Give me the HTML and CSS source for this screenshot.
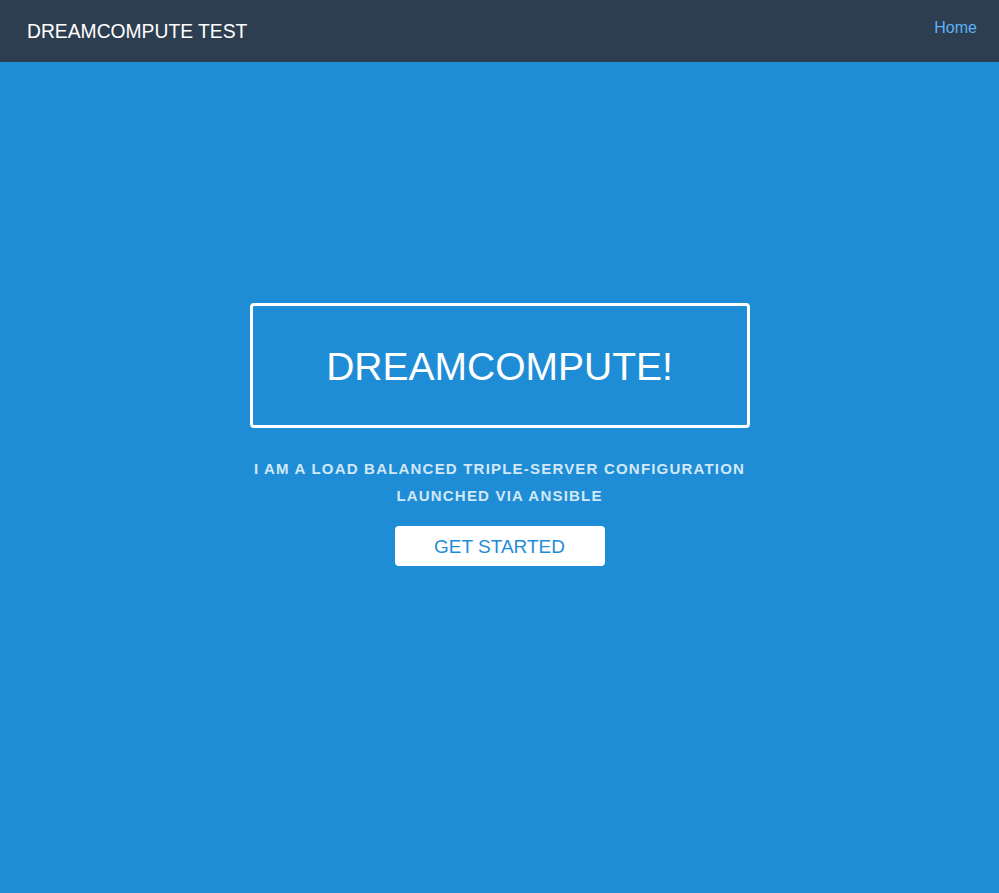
FILE: index.html
```html
<!DOCTYPE html>
<html lang="en">
<head>
<meta charset="utf-8">
<title>DreamCompute Test</title>
<link rel="stylesheet" href="styles.css">
</head>
<body>
<header class="nav">
  <a class="brand" href="#">DREAMCOMPUTE TEST</a>
  <a class="nav-link" href="#">Home</a>
</header>
<main class="splash">
  <h1 class="splash-head">DREAMCOMPUTE!</h1>
  <p class="splash-sub">I am a load balanced triple-server configuration<br>launched via Ansible</p>
  <a class="btn" href="#">GET STARTED</a>
</main>
</body>
</html>
```
FILE: styles.css
```css
html, body {
  margin: 0;
  padding: 0;
  height: 100%;
}
body {
  background: #1f8dd6;
  font-family: "Liberation Sans", Arial, Helvetica, sans-serif;
}
.nav {
  height: 62px;
  background: #2d3e50;
  display: flex;
  justify-content: space-between;
  align-items: flex-start;
  box-sizing: border-box;
  padding: 0 22px 0 27px;
}
.brand {
  color: #fff;
  text-decoration: none;
  font-size: 19.3px;
  line-height: 19px;
  margin-top: 22px;
}
.nav-link {
  color: #5eb3f6;
  text-decoration: none;
  font-size: 16px;
  line-height: 16px;
  margin-top: 20px;
}
.splash {
  display: flex;
  flex-direction: column;
  align-items: center;
  padding-top: 241px;
}
.splash-head {
  box-sizing: border-box;
  width: 500px;
  height: 125px;
  margin: 0;
  border: 3px solid #fff;
  border-radius: 4px;
  color: #fff;
  font-weight: normal;
  font-size: 39px;
  display: flex;
  align-items: center;
  justify-content: center;
  padding-top: 2px;
}
.splash-sub {
  margin: 27px 0 0;
  color: #d2e8f7;
  font-weight: bold;
  font-size: 15px;
  line-height: 27px;
  letter-spacing: 1.2px;
  text-transform: uppercase;
  text-align: center;
}
.btn {
  margin-top: 17px;
  width: 210px;
  height: 40px;
  background: #fff;
  border-radius: 4px;
  color: #1f8dd6;
  text-decoration: none;
  font-size: 19px;
  display: flex;
  align-items: center;
  justify-content: center;
  padding-top: 1px;
  box-sizing: border-box;
}
```
